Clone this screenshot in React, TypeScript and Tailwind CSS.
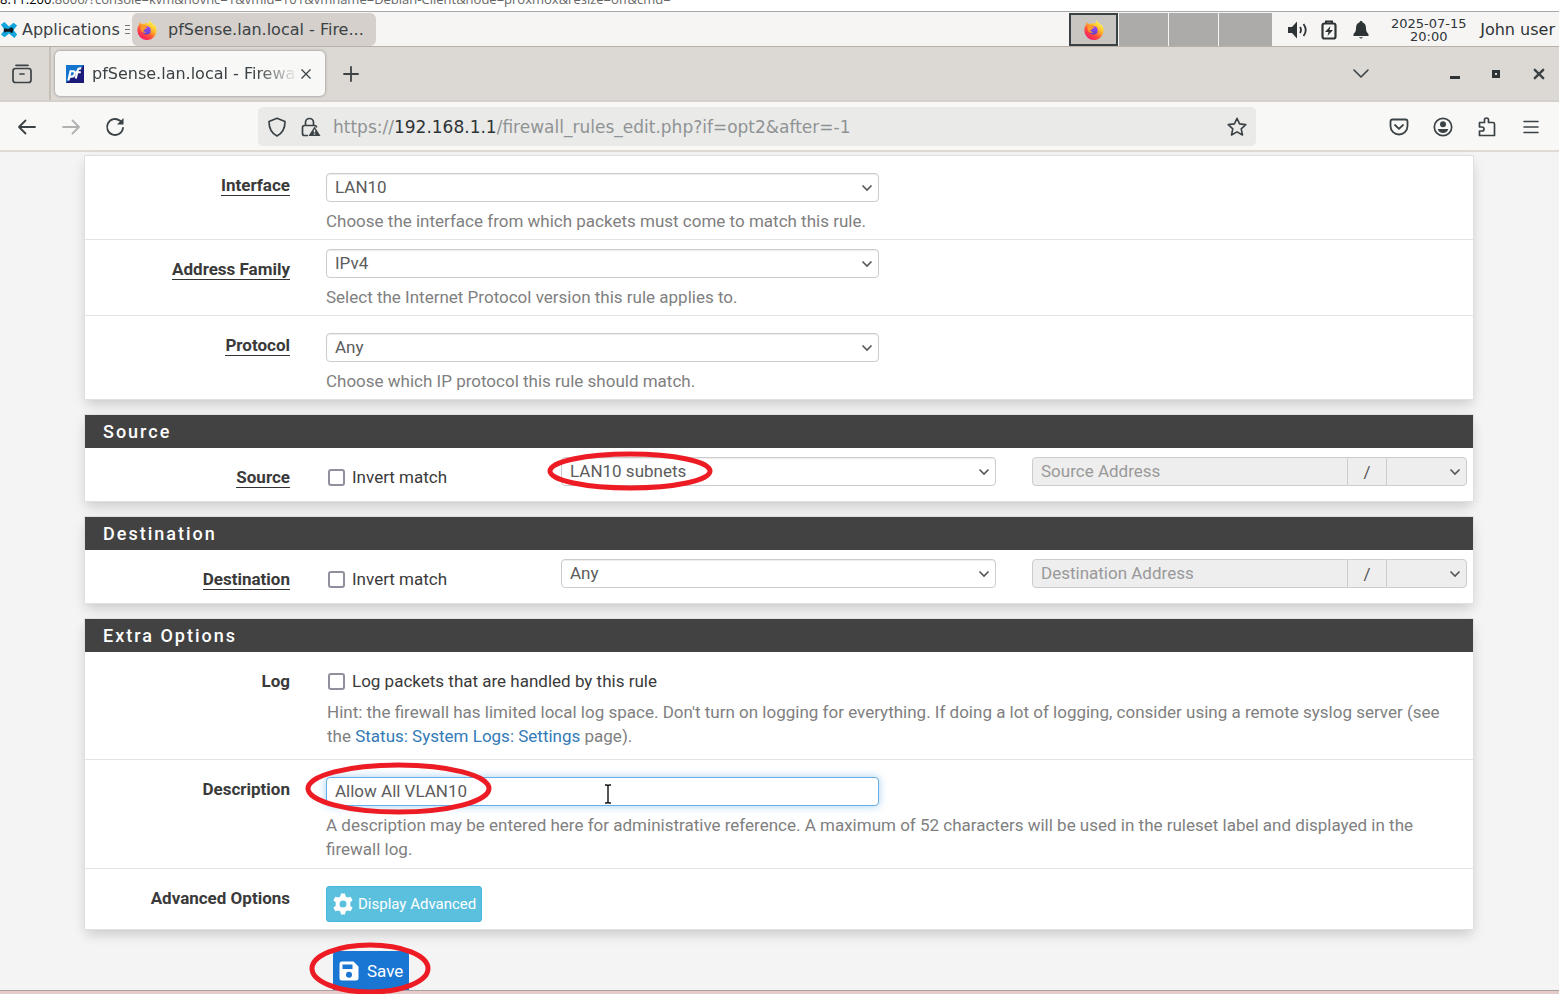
import type { ReactNode } from 'react';

const chrome = "font-['DejaVu_Sans',sans-serif]";

function Firefox({ id }: { id: string }) {
  return (
    <svg viewBox="0 0 20 20" className="size-5 shrink-0" aria-hidden="true">
      <defs>
        <linearGradient id={`${id}-a`} x1="0.8" y1="0.1" x2="0.2" y2="0.95">
          <stop offset="0" stopColor="#fff44f" />
          <stop offset="0.35" stopColor="#ffb52b" />
          <stop offset="0.65" stopColor="#ff4f3a" />
          <stop offset="1" stopColor="#f5156c" />
        </linearGradient>
        <linearGradient id={`${id}-b`} x1="0.6" y1="0" x2="0.4" y2="1">
          <stop offset="0" stopColor="#a04cf0" />
          <stop offset="1" stopColor="#5b3fd0" />
        </linearGradient>
      </defs>
      <path
        fill={`url(#${id}-a)`}
        d="M12.4.3c.9 1.500 2 2.300 3.100 3.300.7.600 1.200 1.300 1.500 1.900l.2-1.300c1.500 1.700 2.500 4.100 2.400 6.300A9.600 9.600 0 0 1 .4 10.400C.3 8 1.100 5.800 2.300 4.200l.3-1.900c.9.400 1.500 1 2 1.700.8-.2 1.700-.2 2.500 0C8 3.200 9 2.900 9.800 3c.8.100 1.400.5 2 .9-.2-1.300 0-2.500.6-3.600Z"
      />
      <circle cx="9.600" cy="10.400" r="4.100" fill={`url(#${id}-b)`} />
      <path fill="#ff9a2b" d="M4.300 6.200c1-.9 2.300-1.200 3.400-.8.500-.2 1.200-.3 1.900-.1-.9.500-1.300 1-1.300 1.500.8.200 1.700.1 2 .3.100.6-.6 1.200-1.700 1.500-.3 1.100-1.400 1.700-2.400 1.300.3 1.600 1.900 2.300 3.600 2-2 1.500-5 .8-6-1.700-.5-1.500-.2-3 .5-4Z" />
    </svg>
  );
}

function PfLogo() {
  return (
    <svg viewBox="0 0 18 18" className="size-[18px] shrink-0" aria-hidden="true">
      <rect width="18" height="18" fill="#1b1a7a" />
      <path d="M0 0h18L0 18Z" fill="#1475cf" />
      <g fill="none" stroke="#fff" strokeWidth="2.100">
        <path d="M2.400 15.500 4.500 6.300h2.700c1.400 0 1.900.9 1.600 2.400-.3 1.700-1.200 2.900-2.900 2.900H4" />
        <path d="m9.800 13.500 1.900-8.200c.4-1.600 1.400-2.200 3.600-1.900M9.800 7.300h5" />
      </g>
    </svg>
  );
}

function Line({ d, size = 'size-5', width = 1.6 }: { d: string; size?: string; width?: number }) {
  return (
    <svg viewBox="0 0 20 20" className={`${size} shrink-0`} fill="none" stroke="currentColor" strokeWidth={width} strokeLinecap="round" strokeLinejoin="round" aria-hidden="true">
      <path d={d} />
    </svg>
  );
}

function Chevron() {
  return (
    <svg viewBox="0 0 12 8" className="pointer-events-none absolute top-1/2 right-[6px] h-2 w-3 -translate-y-1/2" fill="none" stroke="#555" strokeWidth="1.600" aria-hidden="true">
      <path d="m1.500 1.500 4.500 4.500 4.500-4.500" />
    </svg>
  );
}

function Ring({ className }: { className: string }) {
  return (
    <svg className={`pointer-events-none absolute z-10 max-w-none overflow-visible ${className}`} aria-hidden="true">
      <ellipse cx="50%" cy="50%" rx="50%" ry="50%" fill="none" stroke="#ed1c24" strokeWidth="5" />
    </svg>
  );
}

function Select({ id, label, value }: { id: string; label?: string; value: string }) {
  return (
    <div className="relative">
      <select
        id={id}
        aria-label={label}
        className="block h-[29px] w-full appearance-none rounded-[4px] border border-[#ccc] bg-white px-2 pb-px text-[17px] leading-5 text-[#5c5c5c] shadow-[inset_0_1px_1px_rgba(0,0,0,0.075)]"
      >
        <option>{value}</option>
      </select>
      <Chevron />
    </div>
  );
}

function Check({ text }: { text: string }) {
  return (
    <label className="flex h-6 items-center gap-[7px] pl-[2px]">
      <input type="checkbox" className="size-[17px] appearance-none rounded-[3px] border-2 border-[#8f8f9d] bg-white" />
      {text}
    </label>
  );
}

function Row({ label, htmlFor, underline, children }: { label: string; htmlFor?: string; underline?: boolean; children: ReactNode }) {
  return (
    <div className="grid grid-cols-[205px_1fr] gap-9 border-b border-[#e4e4e4] pr-[6px] last:border-b-0">
      <div className="pt-[17px] text-right leading-6 font-bold">
        <label htmlFor={htmlFor} className={underline ? 'inline-block border-b border-[#333] leading-5' : ''}>
          {label}
        </label>
      </div>
      {children}
    </div>
  );
}

function Panel({ title, children }: { title?: string; children: ReactNode }) {
  return (
    <section className="border border-[#e0e0e0] bg-white shadow-[0_6px_12px_-2px_rgba(0,0,0,0.18)]">
      {title && (
        <h2 className="bg-[#424242] px-[18px] py-1 text-[18px] leading-[25px] font-medium tracking-[2px] text-white">{title}</h2>
      )}
      {children}
    </section>
  );
}

function AddressRow({ name, value, ring }: { name: string; value: string; ring?: boolean }) {
  const id = name.toLowerCase();
  return (
    <Row label={name} htmlFor={id} underline>
      <div className="grid grid-cols-[199px_1fr_1fr] gap-9 pb-3">
        <div className="pt-[17px]">
          <Check text="Invert match" />
        </div>
        <div className="relative pt-[9px]">
          <Select id={id} value={value} />
          {ring && <Ring className="-left-[11px] top-[6px] h-[34px] w-[160px]" />}
        </div>
        <div className="flex pt-[9px]">
          <input
            disabled
            aria-label={`${name} Address`}
            placeholder={`${name} Address`}
            className="h-[29px] min-w-0 flex-1 rounded-l-[4px] border border-[#ccc] bg-[#eee] px-2 pb-[2px] placeholder:text-[#999]"
          />
          <span className="flex h-[29px] w-[38px] items-center justify-center border-y border-[#ccc] bg-[#eee] text-[#555]">/</span>
          <div className="relative h-[29px] w-[81px]">
            <select disabled aria-label={`${name} mask`} className="block h-[29px] w-full appearance-none rounded-r-[4px] border border-[#ccc] bg-[#eee]" />
            <Chevron />
          </div>
        </div>
      </div>
    </Row>
  );
}

const fields = [
  { id: 'interface', label: 'Interface', value: 'LAN10', help: 'Choose the interface from which packets must come to match this rule.', pad: 'pt-[17px]' },
  { id: 'family', label: 'Address Family', value: 'IPv4', help: 'Select the Internet Protocol version this rule applies to.', pad: 'pt-[9px]' },
  { id: 'protocol', label: 'Protocol', value: 'Any', help: 'Choose which IP protocol this rule should match.', pad: 'pt-[17px]' },
];

export default function App() {
  return (
    <div className="flex h-screen flex-col overflow-hidden bg-white font-[Roboto,sans-serif] text-[17px] leading-6 text-[#3a3a3a]">
      <div className="flex h-[11px] shrink-0 items-end overflow-hidden font-['Open_Sans',sans-serif] text-[13px] leading-4 whitespace-nowrap text-[#666]">
        <p className="mb-1">
          <span className="text-black">8.11.200</span>:8006/?console=kvm&amp;novnc=1&amp;vmid=101&amp;vmname=Debian-Client&amp;node=proxmox&amp;resize=off&amp;cmd=
        </p>
      </div>

      <header className={`flex h-9 shrink-0 items-stretch border-t border-b border-t-[#a9a9a9] border-b-[#b8afa7] bg-[#f6f5f4] pt-px ${chrome} text-[16px] text-[#3b4245]`}>
        <button type="button" className="flex w-[132px] items-center gap-1 overflow-hidden whitespace-nowrap">
          <svg viewBox="0 0 20 20" className="size-[18px] shrink-0" aria-hidden="true">
            <path d="m1 4 4-3 5 5 5-4 4 3-4 5 4 5-3 4-6-5-5 4-4-3 4-5Z" fill="#12a4dc" />
            <path d="m5 8 4 1 4-2 2 2-1 4-2 0-1-1-4 0-2 1-1-3Z" fill="#101820" />
          </svg>
          Applications
          <span className="flex flex-col gap-[3px] pl-px" aria-hidden="true">
            <i className="h-px w-[5px] bg-[#777]" />
            <i className="h-px w-[5px] bg-[#777]" />
            <i className="h-px w-[5px] bg-[#777]" />
          </span>
        </button>
        <button type="button" className="flex w-[244px] items-center gap-[11px] rounded-[6px] bg-[#d5d0cc] pl-[5px] whitespace-nowrap">
          <Firefox id="task" />
          pfSense.lan.local - Fire...
        </button>
        <div className="ml-auto flex w-[203px] gap-px">
          <button type="button" aria-label="Workspace 1" className="flex w-[49px] items-center justify-center border-2 border-[#3b4245] bg-[#c9c5c1]">
            <Firefox id="space" />
          </button>
          <button type="button" aria-label="Workspace 2" className="w-[49px] bg-[#acabaa]" />
          <button type="button" aria-label="Workspace 3" className="w-[49px] bg-[#acabaa]" />
          <button type="button" aria-label="Workspace 4" className="flex-1 bg-[#acabaa]" />
        </div>
        <div className="flex items-center pl-4 text-[#2e3436]">
          <svg viewBox="0 0 20 20" className="mr-[13px] size-5" fill="currentColor" aria-hidden="true">
            <path d="M0 7h4l5-5.500v17L4 13H0Z" />
            <path d="M12 7q2 3 0 6M15.500 4q4.500 6 0 12" fill="none" stroke="currentColor" strokeWidth="1.800" />
          </svg>
          <svg viewBox="0 0 16 20" className="mr-4 h-5 w-4" aria-hidden="true">
            <path d="M5 3V1.500h6V3" fill="none" stroke="currentColor" strokeWidth="2" />
            <rect x="1.500" y="3.500" width="13" height="15" rx="2" fill="none" stroke="currentColor" strokeWidth="2.200" />
            <path d="m9.500 6-5.500 6h3.500l-1 4 5.500-6H8.500Z" fill="currentColor" />
          </svg>
          <svg viewBox="0 0 16 20" className="mr-5 h-5 w-4" fill="currentColor" aria-hidden="true">
            <path d="M8 1c1 0 1.500.6 1.600 1.500C12 3.200 13 5.500 13 8c0 3 .7 4.500 2.500 6v2H.5v-2C2.300 12.500 3 11 3 8c0-2.500 1-4.800 3.400-5.500C6.500 1.600 7 1 8 1ZM6 17.200h4Q8 20 6 17.200Z" />
          </svg>
          <p className="w-[79px] text-center text-[13px] leading-[13px] whitespace-nowrap">2025-07-15<br />20:00</p>
          <p className="ml-3 pr-1 whitespace-nowrap">John user</p>
        </div>
      </header>

      <div className={`flex h-[55px] shrink-0 items-stretch border-b-2 border-[#d5d0ca] bg-[#dcd8d4] ${chrome} text-[16px] text-[#3b4245]`}>
        <button type="button" aria-label="Tab overview" className="flex w-[51px] items-center border-r-2 border-[#c6c0bb] pl-3">
          <svg viewBox="0 0 20 20" className="size-5" fill="none" stroke="currentColor" strokeWidth="1.700" strokeLinecap="round" aria-hidden="true">
            <path d="M4 1.300h12M8 10h4" />
            <path d="M1 8V7q0-2.500 2.500-2.500h13Q19 4.500 19 7v9q0 2.500-2.500 2.500h-13Q1 18.500 1 16Z" />
          </svg>
        </button>
        <div className="my-1 ml-1 flex w-[270px] items-center rounded-[5px] bg-[#f8f8f7] pr-3 pl-[11px] shadow-[0_0_3px_rgba(0,0,0,0.4)]">
          <PfLogo />
          <span className="ml-2 min-w-0 flex-1 overflow-hidden whitespace-nowrap [mask-image:linear-gradient(to_right,black_80%,transparent)]">pfSense.lan.local - Firewall</span>
          <button type="button" aria-label="Close tab" className="ml-px">
            <Line size="size-[14px]" width={1.8} d="M4 4l12 12M16 4 4 16" />
          </button>
        </div>
        <button type="button" aria-label="New tab" className="ml-4">
          <Line width={1.8} d="M10 3v14M3 10h14" />
        </button>
        <div className="ml-auto flex items-center pr-[13px]">
          <button type="button" aria-label="List all tabs" className="mr-[79px]"><Line d="m3 6 7 7 7-7" /></button>
          <button type="button" aria-label="Minimize" className="mr-8 size-[10px] border-b-[3px] border-[#2e3436]" />
          <button type="button" aria-label="Maximize" className="mr-8 size-2 border-[3px] border-[#2e3436]" />
          <button type="button" aria-label="Close"><Line size="size-[14px]" width={3.4} d="m4 4 12 12M16 4 4 16" /></button>
        </div>
      </div>

      <nav className={`flex h-[50px] shrink-0 items-center border-b-2 border-[#e0dad5] bg-[#f8f8f7] pt-px ${chrome} text-[#3b4245]`}>
        <div className="flex w-[258px] items-center gap-6 pl-[17px]">
          <button type="button" aria-label="Back"><Line width={1.8} d="M18 10H2M8.500 3.500 2 10l6.500 6.500" /></button>
          <button type="button" aria-label="Forward" disabled className="text-[#b0b2b2]"><Line width={1.8} d="M2 10h16m-6.500-6.500L18 10l-6.500 6.500" /></button>
          <button type="button" aria-label="Reload">
            <svg viewBox="0 0 20 20" className="size-5" fill="none" stroke="currentColor" strokeWidth="1.800" strokeLinecap="round" aria-hidden="true">
              <path d="M18 11a8 8 0 1 1-3-7.300L17 5.500" />
              <path d="M18.500 1v6.500H12Z" fill="currentColor" stroke="none" />
            </svg>
          </button>
        </div>
        <div className="flex h-[39px] w-[998px] min-w-0 items-center rounded-[5px] bg-[#eaeae9] px-[9px]">
          <Line width={1.7} d="M10 1.200 18 4.500c0 7-2 11.500-8 14.500-6-3-8-7.500-8-14.500Z" />
          <svg viewBox="0 0 20 20" className="ml-[14px] size-5 shrink-0" fill="none" stroke="currentColor" strokeWidth="1.700" aria-hidden="true">
            <path d="M4.500 8.500V5.500a4 4 0 0 1 8 0v3M7 18.500H3.500q-2 0-2-2v-6q0-2 2-2h10q2 0 2 2" />
            <path d="m13.500 9.500 6 9.500h-12Z" fill="currentColor" stroke="none" />
            <path d="M13.500 12.500v3m0 1v1.300" stroke="#eaeae9" strokeWidth="1.400" />
          </svg>
          <p className="ml-3 whitespace-nowrap text-[#8f9394]">
            https://<span className="text-[#2e3436]">192.168.1.1</span>/firewall_rules_edit.php?if=opt2&amp;after=-1
          </p>
          <button type="button" aria-label="Bookmark this page" className="ml-auto">
            <Line width={1.6} d="m10 1.300 2.600 5.600 6.200.7-4.600 4.200 1.300 6.200L10 14.900 4.500 18l1.300-6.200L1.200 7.600l6.200-.7Z" />
          </button>
        </div>
        <div className="ml-auto flex items-center gap-6 pr-[18px]">
          <button type="button" aria-label="Save to Pocket"><Line width={1.8} d="M3.500 2.500h13q2 0 2 2V9c0 5-4 8.500-8.500 8.500S1.500 14 1.500 9V4.500q0-2 2-2ZM6 8l4 3.800L14 8" /></button>
          <button type="button" aria-label="Account">
            <svg viewBox="0 0 20 20" className="size-5" aria-hidden="true">
              <circle cx="10" cy="10" r="8.700" fill="none" stroke="currentColor" strokeWidth="1.700" />
              <circle cx="10" cy="7.300" r="3" fill="currentColor" />
              <path d="M4.700 12h10.600c-.7 2.700-2.700 4-5.300 4s-4.600-1.300-5.300-4Z" fill="currentColor" />
            </svg>
          </button>
          <button type="button" aria-label="Extensions"><Line width={1.700} d="M2.500 7V5.500h5V3a2 2 0 0 1 4 0v2.500h4.500q1.500 0 1.500 1.500v11.500h-15V14h2.500a1.900 1.900 0 0 0 0-4H2.500Z" /></button>
          <button type="button" aria-label="Menu"><Line width={1.600} d="M3 4.500h14M3 10h14M3 15.500h14" /></button>
        </div>
      </nav>

      <main className="flex min-h-0 flex-1 flex-col gap-[14px] bg-[#f4f4f4] pt-[3px] pr-[85px] pl-[84px]">
        <Panel>
          {fields.map((f) => (
            <Row key={f.id} label={f.label} htmlFor={f.id} underline>
              <div className={`pb-[6px] ${f.pad}`}>
                <div className="max-w-[553px]"><Select id={f.id} value={f.value} /></div>
                <p className="mt-[7px] text-[#808080]">{f.help}</p>
              </div>
            </Row>
          ))}
        </Panel>

        <Panel title="Source"><AddressRow name="Source" value="LAN10 subnets" ring /></Panel>
        <Panel title="Destination"><AddressRow name="Destination" value="Any" /></Panel>

        <Panel title="Extra Options">
          <Row label="Log">
            <div className="pt-[17px] pb-[11px]">
              <Check text="Log packets that are handled by this rule" />
              <p className="mt-[7px] pr-4 pl-px text-[#808080]">
                Hint: the firewall has limited local log space. Don't turn on logging for everything. If doing a lot of logging, consider using a remote syslog server (see the{' '}
                <a href="#logs" className="text-[#337ab7]">Status: System Logs: Settings</a> page).
              </p>
            </div>
          </Row>
          <Row label="Description" htmlFor="description">
            <div className="relative pt-[17px] pb-[7px]">
              <input
                id="description"
                defaultValue="Allow All VLAN10"
                className="block h-[29px] w-full max-w-[553px] rounded-[4px] border border-[#66afe9] bg-white px-2 pb-[2px] text-[#5c5c5c] shadow-[0_0_8px_rgba(102,175,233,0.6)]"
              />
              <Ring className="-left-[18px] top-[5px] h-[47px] w-[181px]" />
              <svg viewBox="0 0 8 20" className="pointer-events-none absolute top-6 left-[278px] h-5 w-2" fill="none" stroke="#111" strokeWidth="1.400" aria-hidden="true">
                <path d="M1 1h2l1 1 1-1h2M4 2v16M1 19h2l1-1 1 1h2" />
              </svg>
              <p className="mt-[7px] pr-4 text-[#808080]">
                A description may be entered here for administrative reference. A maximum of 52 characters will be used in the ruleset label and displayed in the firewall log.
              </p>
            </div>
          </Row>
          <Row label="Advanced Options">
            <div className="pt-[17px] pb-[7px]">
              <button type="button" className="flex h-9 items-center gap-1 rounded-[3px] border border-[#46b8da] bg-[#5bc0de] px-[5px] text-[15px] text-white">
                <svg viewBox="0 0 22 22" className="size-[22px]" fill="#fff" aria-hidden="true">
                  <path fillRule="evenodd" d="M9 .5h4l.7 3 1.900 1.100 3-.9 2 3.500-2.300 2.100v3.400l2.300 2.100-2 3.500-3-.9-1.900 1.100-.7 3H9l-.7-3-1.900-1.100-3 .9-2-3.500 2.300-2.100V9.300L1.400 7.200l2-3.500 3 .9 1.900-1.100ZM11 7.500a3.500 3.500 0 1 0 0 7 3.500 3.500 0 0 0 0-7Z" />
                </svg>
                Display Advanced
              </button>
            </div>
          </Row>
        </Panel>

        <div className="pt-[7px] pl-[249px]">
          <div className="relative w-fit">
            <button type="submit" className="flex h-[39px] items-center gap-2 rounded-t-[4px] bg-[#1976d2] px-[6px] text-white">
              <svg viewBox="0 0 20 20" className="size-5" aria-hidden="true">
                <path fill="#fff" fillRule="evenodd" d="M3 .5h11.500l5 5V17q0 2.500-2.500 2.500H3Q.5 19.500.5 17V3Q.5.5 3 .5ZM3.500 3.500v4.500h10V3.500ZM10 10.800a3 3 0 1 0 0 6 3 3 0 0 0 0-6Z" />
              </svg>
              Save
            </button>
            <Ring className="-left-[21px] -top-[6px] h-[47px] w-[116px]" />
          </div>
        </div>
      </main>
      <footer className="h-1 shrink-0 border-t border-[#a9a0a0] bg-[#e6cbca]" />
    </div>
  );
}
